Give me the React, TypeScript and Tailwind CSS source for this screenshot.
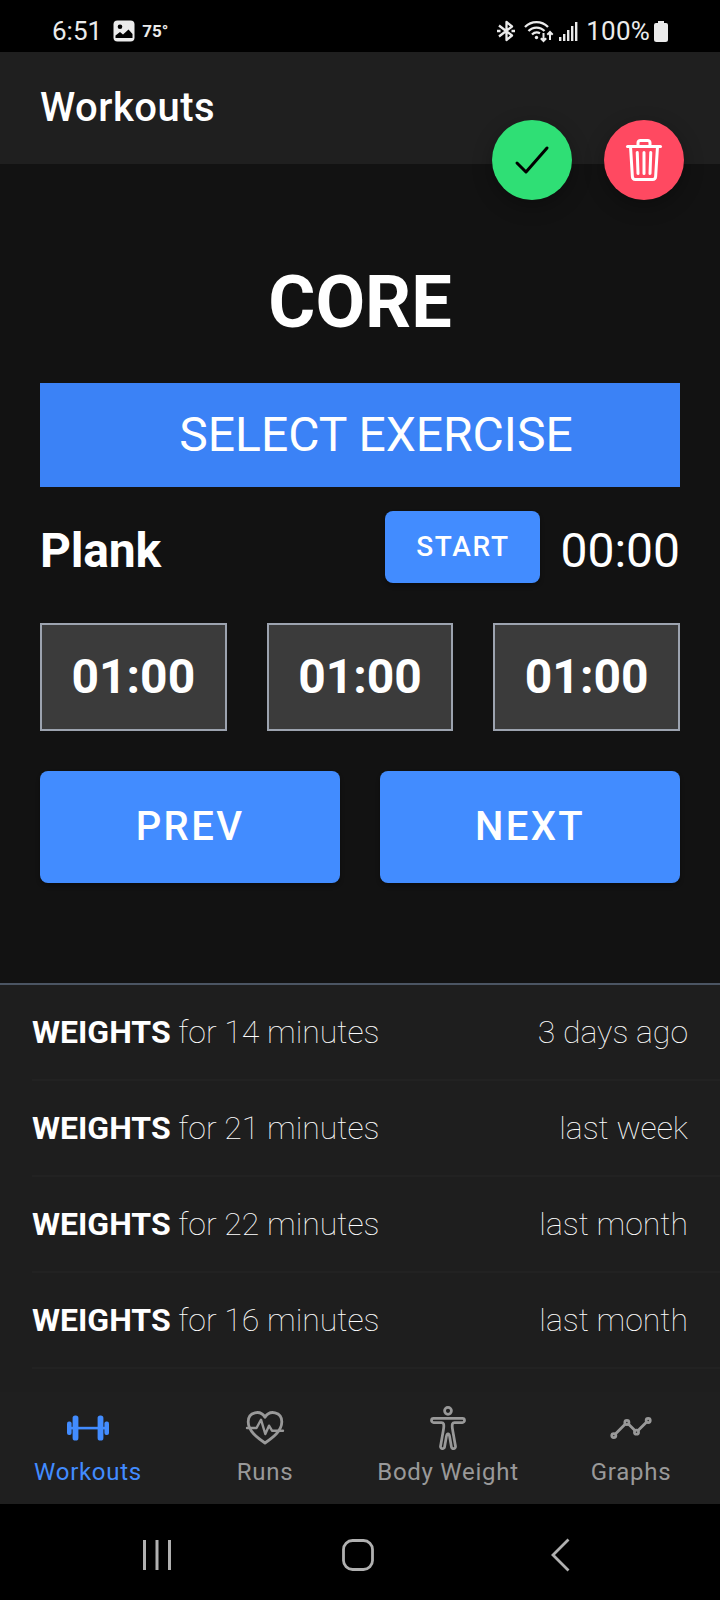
import {
  IoAnalyticsOutline,
  IoBodyOutline,
  IoCheckmarkOutline,
  IoTrashOutline,
} from "react-icons/io5";
import type { ReactNode } from "react";

const history = [
  { minutes: 14, when: "3 days ago" },
  { minutes: 21, when: "last week" },
  { minutes: 22, when: "last month" },
  { minutes: 16, when: "last month" },
];

function Barbell() {
  return (
    <svg width="44" height="28" viewBox="0 0 44 28" fill="currentColor">
      <rect x="1" y="7.500" width="4.600" height="13.500" rx="2" />
      <rect x="6.600" y="1.400" width="5.800" height="25.200" rx="2.600" />
      <rect x="31.600" y="1.400" width="5.800" height="25.200" rx="2.600" />
      <rect x="38.400" y="7.500" width="4.600" height="13.500" rx="2" />
      <rect x="3" y="12.800" width="38" height="2.600" />
    </svg>
  );
}

function HeartPulse() {
  return (
    <svg width="40" height="36" viewBox="0 0 40 36" fill="none" stroke="currentColor" strokeWidth="2.800" strokeLinecap="round" strokeLinejoin="round">
      <path d="M20 33C12 27.500 3.200 21 3.200 11.800C3.200 1.500 15.500 -0.500 20 7.300C24.500 -0.500 36.800 1.500 36.800 11.800C36.800 21 28 27.500 20 33Z" />
      <path d="M2 18h9.500l4.500-8.300 4.300 14.300 3.700-8.300 3 5h11" strokeWidth="2.400" />
    </svg>
  );
}

function StatusBar() {
  return (
    <div className="flex h-[52px] shrink-0 items-center bg-black pt-[10px] pr-[52px] pl-[52px] text-[#ebebeb]">
      <span className="text-[26px] leading-none">6:51</span>
      <svg className="ml-[11px]" width="22" height="22" viewBox="0 0 22 22">
        <rect x="0.500" y="0.500" width="21" height="21" rx="4" fill="#ebebeb" />
        <circle cx="7" cy="6.800" r="2.300" fill="#000" />
        <path d="M2.500 18v-2.500l4.500-3.500 3 2.500 5.500-5 4 4.500V18Z" fill="#000" />
      </svg>
      <span className="ml-[7px] text-[17px] leading-none font-bold">75°</span>
      <div className="ml-auto flex items-center">
        <svg width="18" height="22" viewBox="0 0 18 22" fill="none" stroke="#ebebeb" strokeWidth="2.300" strokeLinejoin="round">
          <path d="M2 5.500 15 15.500 9.500 20V2l5.500 4.500L2 16.500" />
          <path d="M0 11h3.500M14.500 11H18" />
        </svg>
        <svg className="ml-[9px]" width="30" height="24" viewBox="0 0 30 24" fill="none" stroke="#ebebeb" strokeWidth="2.300">
          <path d="M1 8a16 16 0 0 1 23 0M4.500 12a11 11 0 0 1 16 0M8 15.500a7 7 0 0 1 8-1.300" />
          <circle cx="12.500" cy="18.500" r="1.700" fill="#ebebeb" stroke="none" />
          <path d="M19.500 14v8M16.800 19.300l2.700 2.700 2.700-2.700M26 21v-8M23.300 15.700 26 13l2.700 2.700" strokeWidth="2" />
        </svg>
        <svg className="ml-[5px]" width="19" height="21" viewBox="0 0 19 21" fill="#ebebeb">
          <rect x="0" y="16" width="2.400" height="4" />
          <rect x="4" y="13" width="2.400" height="7" />
          <rect x="8" y="9" width="2.400" height="11" />
          <rect x="12" y="5" width="2.400" height="15" />
          <rect x="16" y="1" width="2.400" height="19" />
        </svg>
        <span className="ml-[8px] text-[26px] leading-none tracking-[0.2px]">100%</span>
        <svg className="ml-[4px]" width="14" height="21" viewBox="0 0 14 21" fill="#ebebeb">
          <path d="M4 0h6v2h2a2 2 0 0 1 2 2v14.500a2.500 2.500 0 0 1-2.500 2.500H2.500A2.500 2.500 0 0 1 0 18.500V4a2 2 0 0 1 2-2h2Z" />
        </svg>
      </div>
    </div>
  );
}

function Tab({ icon, label, active }: { icon: ReactNode; label: string; active?: boolean }) {
  return (
    <div className={`flex flex-col items-center ${active ? "text-[#428cff]" : "text-[#999999]"}`}>
      <div className="flex h-[48px] items-center">{icon}</div>
      <span className="mt-[4px] text-[24px] leading-[32px] tracking-[0.72px]">{label}</span>
    </div>
  );
}

export default function App() {
  return (
    <div className="flex h-[1600px] w-[720px] flex-col overflow-hidden bg-[#121212] font-[Roboto,sans-serif] text-white">
      <StatusBar />
      <header className="relative flex h-[112px] shrink-0 items-center bg-[#1f1f1f] px-[40px]">
        <h1 className="text-[40px] leading-none font-medium tracking-[0.5px]">Workouts</h1>
        <div className="absolute top-[68px] right-[36px] flex gap-[32px]">
          <button className="flex size-[80px] items-center justify-center rounded-full bg-[#2fdf75] text-black shadow-[0_6px_20px_rgba(0,0,0,0.3)]">
            <IoCheckmarkOutline size={48} />
          </button>
          <button className="flex size-[80px] items-center justify-center rounded-full bg-[#ff4961] text-white shadow-[0_6px_20px_rgba(0,0,0,0.3)]">
            <IoTrashOutline size={48} />
          </button>
        </div>
      </header>

      <main className="flex h-[819px] shrink-0 flex-col px-[40px] pt-[103px]">
        <h2 className="text-center text-[72px] leading-[72px] font-bold">CORE</h2>
        <button className="mt-[44px] flex h-[104px] shrink-0 items-center justify-center bg-[#3b82f6] pl-[32px] text-[48px]">
          SELECT EXERCISE
        </button>
        <div className="mt-[24px] flex h-[72px] shrink-0 items-center text-[48px]">
          <span className="pt-[8px] font-bold tracking-[-0.2px]">Plank</span>
          <button className="ml-auto flex h-[72px] w-[155px] items-center justify-center rounded-[8px] bg-[#428cff] text-[28px] font-medium tracking-[1.68px] shadow-[0_3px_4px_rgba(0,0,0,0.3)]">
            START
          </button>
          <span className="ml-[20px] pt-[8px]">00:00</span>
        </div>
        <div className="mt-[40px] grid grid-cols-3 gap-[40px]">
          {[0, 1, 2].map((set) => (
            <div key={set} className="flex h-[108px] items-center justify-center border-2 border-[#9ca3af] bg-[#3b3b3b] text-[48px] font-bold">
              01:00
            </div>
          ))}
        </div>
        <div className="mt-[40px] grid grid-cols-2 gap-[40px]">
          {["PREV", "NEXT"].map((label) => (
            <button key={label} className="flex h-[112px] items-center justify-center rounded-[8px] bg-[#428cff] text-[40px] font-medium tracking-[2.4px] shadow-[0_3px_4px_rgba(0,0,0,0.3)]">
              {label}
            </button>
          ))}
        </div>
      </main>

      <section className="flex-1 overflow-hidden border-t-2 border-[#4b5563] bg-[#1e1e1e]">
        {history.map((entry, i) => (
          <div key={i} className="ml-[32px] flex h-[96px] items-center justify-between border-b-2 border-[#222222] pr-[32px] text-[32px] font-thin">
            <span>
              <strong className="font-bold">WEIGHTS</strong> for {entry.minutes} minutes
            </span>
            <span>{entry.when}</span>
          </div>
        ))}
      </section>

      <nav className="grid h-[112px] shrink-0 grid-cols-[176px_178px_188px_178px] items-start bg-[#1f1f1f] pt-[12px]">
        <Tab icon={<Barbell />} label="Workouts" active />
        <Tab icon={<HeartPulse />} label="Runs" />
        <Tab icon={<IoBodyOutline size={44} />} label="Body Weight" />
        <Tab icon={<IoAnalyticsOutline size={44} />} label="Graphs" />
      </nav>

      <div className="flex h-[96px] shrink-0 items-center bg-black pt-[6px] pl-[142px]">
        <svg width="30" height="30" viewBox="0 0 30 30" fill="none" stroke="#b0b0b0" strokeWidth="3">
          <path d="M2.500 0v30M15 0v30M27.500 0v30" />
        </svg>
        <svg className="ml-[170px]" width="32" height="32" viewBox="0 0 32 32" fill="none" stroke="#b0b0b0" strokeWidth="2.800">
          <rect x="1.500" y="1.500" width="29" height="29" rx="9" />
        </svg>
        <svg className="ml-[177px]" width="20" height="34" viewBox="0 0 20 34" fill="none" stroke="#b0b0b0" strokeWidth="2.800">
          <path d="M17.500 1.500 2 17l15.500 15.500" />
        </svg>
      </div>
    </div>
  );
}
